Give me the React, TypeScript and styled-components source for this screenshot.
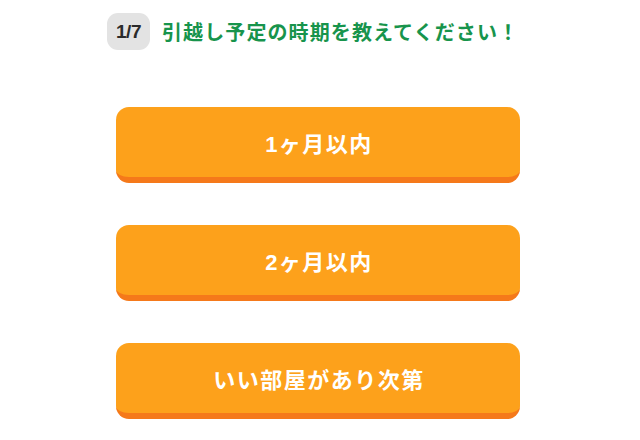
import React from "react";
import styled, { createGlobalStyle } from "styled-components";

const Global = createGlobalStyle`
  html, body { margin: 0; padding: 0; background: #ffffff; }
  body { font-family: "Liberation Sans", "Noto Sans CJK JP", sans-serif; }
`;

const Page = styled.div`
  width: 640px;
  height: 440px;
  display: flex;
  flex-direction: column;
  padding: 13px 0 0 0;
  box-sizing: border-box;
  overflow: hidden;
`;

const Header = styled.div`
  display: flex;
  align-items: center;
  gap: 12px;
  padding-left: 107px;
  height: 37px;
`;

const Badge = styled.div`
  width: 43px;
  height: 37px;
  border-radius: 11px;
  background: #e3e3e3;
  color: #2b2b2b;
  font-weight: 700;
  font-size: 19px;
  display: flex;
  align-items: center;
  justify-content: center;
  letter-spacing: -0.5px;
`;

const Title = styled.div`
  color: #17944c;
  font-family: "Noto Sans CJK JP", sans-serif;
  font-weight: 700;
  font-size: 20px;
  letter-spacing: 1.1px;
`;

const List = styled.div`
  display: flex;
  flex-direction: column;
  gap: 42px;
  padding-left: 116px;
  margin-top: 57px;
`;

const Choice = styled.button`
  width: 404px;
  height: 76px;
  box-sizing: border-box;
  border: none;
  border-bottom: 6px solid #f5791a;
  border-radius: 13px;
  background: #fda11b;
  color: #ffffff;
  font-family: "Liberation Sans", "Noto Sans CJK JP", sans-serif;
  font-weight: 700;
  font-size: 22px;
  letter-spacing: 1.5px;
  display: flex;
  align-items: center;
  justify-content: center;
  padding: 0 0 0 2px;
  cursor: pointer;
`;

const options = ["1ヶ月以内", "2ヶ月以内", "いい部屋があり次第"];

export default function App() {
  return (
    <>
      <Global />
      <Page>
        <Header>
          <Badge>1/7</Badge>
          <Title>引越し予定の時期を教えてください！</Title>
        </Header>
        <List>
          {options.map((o) => (
            <Choice key={o}>{o}</Choice>
          ))}
        </List>
      </Page>
    </>
  );
}
